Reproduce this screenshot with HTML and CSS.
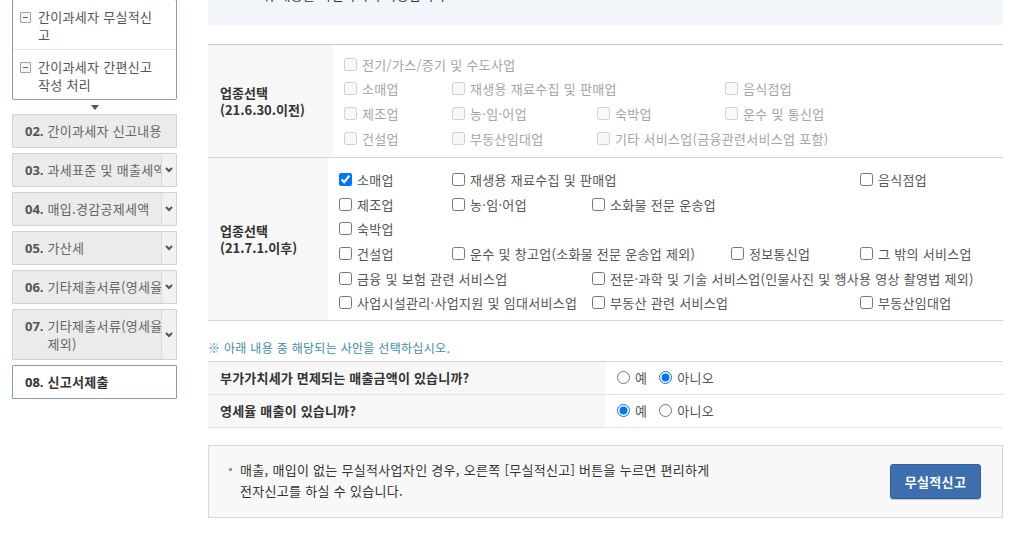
FILE: index.html
```html
<!DOCTYPE html>
<html lang="ko">
<head>
<meta charset="utf-8">
<title>간이과세자 신고</title>
<link rel="stylesheet" href="styles.css">
</head>
<body>
<div class="page">
  <aside class="sidebar">
    <div class="subbox">
      <div class="subitem"><span class="minus"></span><span>간이과세자 무실적신<br>고</span></div>
      <div class="subitem"><span class="minus"></span><span>간이과세자 간편신고<br>작성 처리</span></div>
    </div>
    <div class="down-arrow"><span></span></div>
    <div class="step"><span class="step-label"><b>02.</b> 간이과세자 신고내용</span></div>
    <div class="step"><span class="step-label"><b>03.</b> 과세표준 및 매출세액</span><span class="chev"><svg viewBox="0 0 8 6" width="8" height="6"><polyline points="1,1 4,4 7,1" fill="none" stroke="#555" stroke-width="2"/></svg></span></div>
    <div class="step"><span class="step-label"><b>04.</b> 매입.경감공제세액</span><span class="chev"><svg viewBox="0 0 8 6" width="8" height="6"><polyline points="1,1 4,4 7,1" fill="none" stroke="#555" stroke-width="2"/></svg></span></div>
    <div class="step"><span class="step-label"><b>05.</b> 가산세</span><span class="chev"><svg viewBox="0 0 8 6" width="8" height="6"><polyline points="1,1 4,4 7,1" fill="none" stroke="#555" stroke-width="2"/></svg></span></div>
    <div class="step"><span class="step-label"><b>06.</b> 기타제출서류(영세율)</span><span class="chev"><svg viewBox="0 0 8 6" width="8" height="6"><polyline points="1,1 4,4 7,1" fill="none" stroke="#555" stroke-width="2"/></svg></span></div>
    <div class="step"><span class="step-label wrap"><b>07.</b><span class="lines">기타제출서류(영세율<br>제외)</span></span><span class="chev"><svg viewBox="0 0 8 6" width="8" height="6"><polyline points="1,1 4,4 7,1" fill="none" stroke="#555" stroke-width="2"/></svg></span></div>
    <div class="step active"><span class="step-label"><b>08.</b> 신고서제출</span></div>
  </aside>

  <main class="main">
    <div class="info">※ 위 내용을 확인하시어 사용합니다.</div>

    <div class="biz-table">
      <div class="biz-row">
        <div class="biz-label old">업종선택<br>(21.6.30.이전)</div>
        <div class="biz-grid grid-old">
          <label class="chk off span-4"><input type="checkbox" disabled><span>전기/가스/증기 및 수도사업</span></label>
          <label class="chk off"><input type="checkbox" disabled><span>소매업</span></label>
          <label class="chk off span-2"><input type="checkbox" disabled><span>재생용 재료수집 및 판매업</span></label>
          <label class="chk off"><input type="checkbox" disabled><span>음식점업</span></label>
          <label class="chk off"><input type="checkbox" disabled><span>제조업</span></label>
          <label class="chk off"><input type="checkbox" disabled><span>농·임·어업</span></label>
          <label class="chk off"><input type="checkbox" disabled><span>숙박업</span></label>
          <label class="chk off"><input type="checkbox" disabled><span>운수 및 통신업</span></label>
          <label class="chk off"><input type="checkbox" disabled><span>건설업</span></label>
          <label class="chk off"><input type="checkbox" disabled><span>부동산임대업</span></label>
          <label class="chk off span-2"><input type="checkbox" disabled><span>기타 서비스업(금융관련서비스업 포함)</span></label>
        </div>
      </div>
      <div class="biz-row">
        <div class="biz-label new">업종선택<br>(21.7.1.이후)</div>
        <div class="biz-grid grid-new">
          <label class="chk"><input type="checkbox" checked><span>소매업</span></label>
          <label class="chk span-3"><input type="checkbox"><span>재생용 재료수집 및 판매업</span></label>
          <label class="chk"><input type="checkbox"><span>음식점업</span></label>
          <label class="chk"><input type="checkbox"><span>제조업</span></label>
          <label class="chk"><input type="checkbox"><span>농·임·어업</span></label>
          <label class="chk span-3"><input type="checkbox"><span>소화물 전문 운송업</span></label>
          <label class="chk span-5"><input type="checkbox"><span>숙박업</span></label>
          <label class="chk"><input type="checkbox"><span>건설업</span></label>
          <label class="chk span-2"><input type="checkbox"><span>운수 및 창고업(소화물 전문 운송업 제외)</span></label>
          <label class="chk"><input type="checkbox"><span>정보통신업</span></label>
          <label class="chk"><input type="checkbox"><span>그 밖의 서비스업</span></label>
          <label class="chk span-2"><input type="checkbox"><span>금융 및 보험 관련 서비스업</span></label>
          <label class="chk span-3"><input type="checkbox"><span>전문·과학 및 기술 서비스업(인물사진 및 행사용 영상 촬영법 제외)</span></label>
          <label class="chk span-2"><input type="checkbox"><span>사업시설관리·사업지원 및 임대서비스업</span></label>
          <label class="chk span-2"><input type="checkbox"><span>부동산 관련 서비스업</span></label>
          <label class="chk"><input type="checkbox"><span>부동산임대업</span></label>
        </div>
      </div>
    </div>

    <p class="notice">※ 아래 내용 중 해당되는 사안을 선택하십시오.</p>

    <div class="qtable">
      <div class="qrow">
        <div class="qlabel">부가가치세가 면제되는 매출금액이 있습니까?</div>
        <div class="qval">
          <label class="rad"><input type="radio" name="q1"><span>예</span></label>
          <label class="rad"><input type="radio" name="q1" checked><span>아니오</span></label>
        </div>
      </div>
      <div class="qrow">
        <div class="qlabel">영세율 매출이 있습니까?</div>
        <div class="qval">
          <label class="rad"><input type="radio" name="q2" checked><span>예</span></label>
          <label class="rad"><input type="radio" name="q2"><span>아니오</span></label>
        </div>
      </div>
    </div>

    <div class="nil-box">
      <div class="nil-text">
        <span class="bullet"></span>
        <p>매출, 매입이 없는 무실적사업자인 경우, 오른쪽 [무실적신고] 버튼을 누르면 편리하게<br>전자신고를 하실 수 있습니다.</p>
      </div>
      <button class="nil-btn" type="button">무실적신고</button>
    </div>
  </main>
</div>
</body>
</html>
```

FILE: styles.css
```css
* { box-sizing: border-box; }

html, body { height: 100%; }

body {
  margin: 0;
  font-family: "Noto Sans CJK KR", "Noto Sans", sans-serif;
  font-size: 13px;
  letter-spacing: 0.3px;
  color: #555;
  background: #fff;
  overflow: hidden;
}

.page {
  display: flex;
  align-items: flex-start;
}

/* ---------- sidebar ---------- */
.sidebar {
  width: 165px;
  margin-left: 12px;
  margin-top: -1px;
  flex: none;
}

.subbox {
  border: 1px solid #809dc4;
  border-radius: 2px;
  background: #fff;
}

.subitem {
  display: flex;
  align-items: flex-start;
  gap: 7px;
  padding: 8px 6px 5px 7px;
  line-height: 18px;
  color: #555;
}

.subitem + .subitem { border-top: 1px solid #e4e4e4; }

.minus {
  position: relative;
  flex: none;
  width: 11px;
  height: 11px;
  margin-top: 4px;
  border: 1px solid #a0a0a0;
  border-radius: 1px;
  background: #f6f6f6;
}

.minus::after {
  content: "";
  position: absolute;
  left: 2px;
  right: 2px;
  top: 4px;
  height: 1px;
  background: #666;
}

.down-arrow {
  height: 14px;
  display: flex;
  align-items: center;
  justify-content: center;
}

.down-arrow span {
  width: 0;
  height: 0;
  border-left: 4px solid transparent;
  border-right: 4px solid transparent;
  border-top: 5px solid #555;
}

.step {
  display: flex;
  margin-bottom: 5px;
  border: 1px solid #d2d2d2;
  border-radius: 1px;
  background: #ebebeb;
  line-height: 19px;
}

.step-label {
  flex: 1;
  min-width: 0;
  padding: 6px 0 6px 12px;
  white-space: nowrap;
  overflow: hidden;
  color: #666;
}

.step-label b {
  font-family: "Open Sans", "Noto Sans CJK KR", sans-serif;
  font-weight: 700;
  letter-spacing: 0;
  color: #555;
}

.step-label.wrap {
  display: flex;
  gap: 4px;
  line-height: 18px;
  padding: 7px 0 6px 12px;
}

.step-label .lines {
  white-space: nowrap;
  min-width: 0;
}

.chev {
  flex: none;
  width: 15px;
  display: flex;
  align-items: center;
  justify-content: center;
  border-left: 1px solid #dcdcdc;
  background: #f1f1f1;
}

.step.active {
  background: #fff;
  border-color: #7f9cc4;
}

.step.active .step-label { color: #333; font-weight: 700; }
.step.active .step-label b { color: #333; }

/* ---------- main ---------- */
.main {
  width: 795px;
  margin-left: 31px;
  margin-top: -30px;
  flex: none;
}

.info {
  height: 55px;
  padding: 15px 0 0 37px;
  line-height: 20px;
  background: #f2f5fa;
  color: #333;
}

.biz-table {
  margin-top: 19px;
  border-top: 1px solid #cacaca;
}

.biz-row {
  display: flex;
  border-bottom: 1px solid #d6d6d6;
}

.biz-label {
  flex: none;
  display: flex;
  align-items: center;
  padding-left: 12px;
  background: #f7f7f7;
  font-weight: 700;
  color: #333;
  line-height: 17px;
  letter-spacing: 0;
}

.biz-label.old { width: 125px; }
.biz-label.new { width: 120px; }

.biz-grid {
  flex: 1;
  display: grid;
  grid-auto-rows: 24.6px;
  padding-left: 11px;
}

.grid-old {
  grid-template-columns: 108px 145px 128px 1fr;
  padding-top: 7px;
  padding-bottom: 7px;
}

.grid-new {
  grid-template-columns: 113px 140px 139px 129px 1fr;
  padding-top: 9px;
  padding-bottom: 5px;
}

.span-2 { grid-column: span 2; }
.span-3 { grid-column: span 3; }
.span-4 { grid-column: span 4; }
.span-5 { grid-column: span 5; }

.chk {
  display: flex;
  align-items: center;
  gap: 5px;
  white-space: nowrap;
  color: #555;
}

.chk input {
  margin: 0;
  width: 13px;
  height: 13px;
  flex: none;
}

.chk.off { color: #a5a5a5; }

.notice {
  margin: 18px 0 0;
  line-height: 18px;
  font-size: 12px;
  color: #3d8dab;
}

.qtable {
  margin-top: 4px;
  border-top: 1px solid #d6d6d6;
}

.qrow {
  display: flex;
  height: 33px;
  border-bottom: 1px solid #e2e2e2;
}

.qlabel {
  width: 397px;
  flex: none;
  display: flex;
  align-items: center;
  padding-left: 12px;
  background: #f7f7f7;
  font-weight: 700;
  color: #333;
  letter-spacing: 0.2px;
}

.qval {
  flex: 1;
  display: flex;
  align-items: center;
  gap: 12px;
  padding-left: 12px;
}

.rad {
  display: flex;
  align-items: center;
  gap: 5px;
  color: #555;
}

.rad input {
  margin: 0;
  width: 13px;
  height: 13px;
}

.nil-box {
  margin-top: 17px;
  height: 73px;
  display: flex;
  align-items: center;
  justify-content: space-between;
  padding: 0 21px 0 20px;
  background: #f8f8f8;
  border: 1px solid #d9d9d9;
}

.nil-text {
  display: flex;
  align-items: flex-start;
  gap: 8px;
  margin-top: -3px;
}

.bullet {
  flex: none;
  width: 3px;
  height: 3px;
  margin-top: 9px;
  background: #999;
}

.nil-text p {
  margin: 0;
  line-height: 21px;
  color: #333;
}

.nil-btn {
  width: 91px;
  height: 35px;
  border: 1px solid #33609a;
  border-radius: 3px;
  background: #3d6fae;
  box-shadow: 0 1px 1px rgba(0, 0, 0, 0.2);
  color: #fff;
  font-family: "Noto Sans CJK KR", sans-serif;
  font-size: 13px;
  font-weight: 700;
  letter-spacing: 0.3px;
  padding: 0;
}
```
